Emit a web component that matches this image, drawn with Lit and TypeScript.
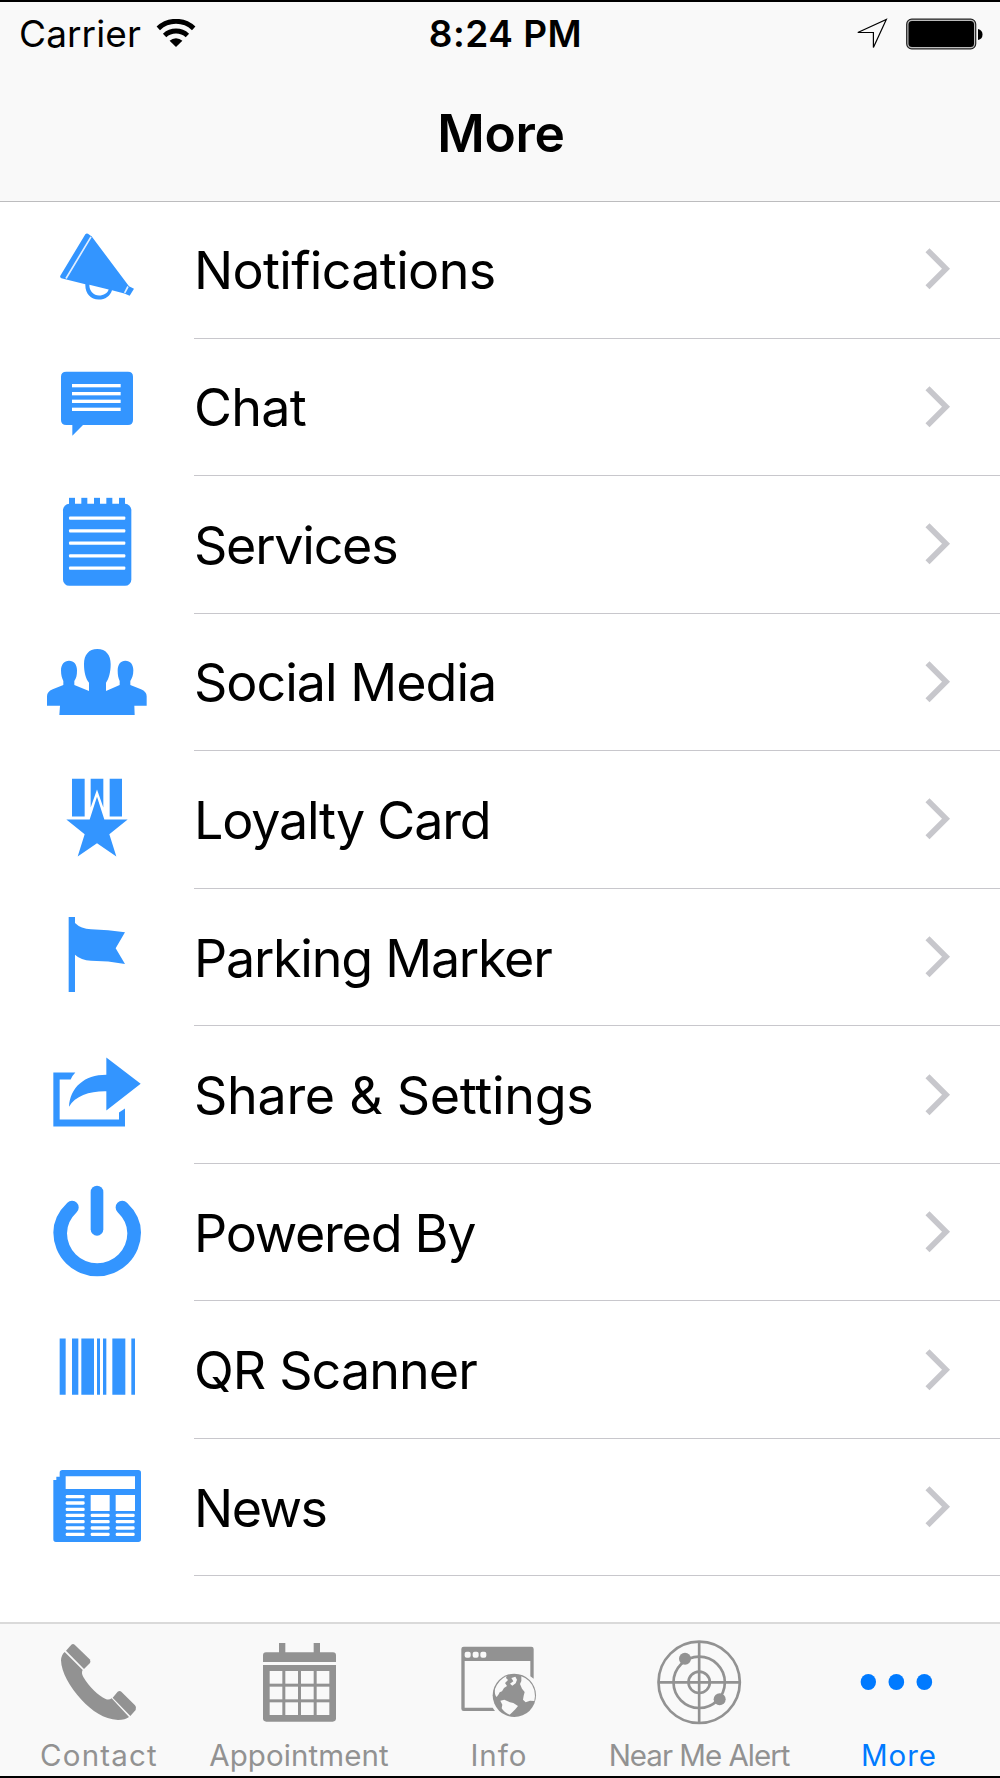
import { LitElement, html, svg, css } from "lit";
import { customElement, property } from "lit/decorators.js";
import { classMap } from "lit/directives/class-map.js";

interface MenuItem {
  label: string;
  spacing: string;
  viewBox: string;
  art: unknown;
}

interface TabItem {
  label: string;
  spacing: string;
  viewBox: string;
  art: unknown;
  active?: boolean;
}

const bars = (x: number, w: number, ys: number[], h: number, r = 3) =>
  ys.map((y) => svg`<rect class="hole" x=${x} y=${y} width=${w} height=${h} rx=${r} />`);

const menu: MenuItem[] = [
  {
    label: "Notifications",
    spacing: "-0.67px",
    viewBox: "0 4.5 582 412.5",
    art: svg`
      <path d="M256 104Q260 100 264 103L272 109Q276 111 278 115L387 260L402 268L389 289L373 282L336 272C331 289 316 300 296 300C272 300 255 282 256 254L184 236Q179 234 181 229Z" />
      <path class="hole" d="M268 256C268 276 281 288 297 288C311 288 323 281 326 270Z" />
      <path class="cut" d="M273 112L198 237M384 261L374 280" />`,
  },
  {
    label: "Chat",
    spacing: "-0.7px",
    viewBox: "0 417 582 412.5",
    art: svg`
      <path d="M199 515H384Q399 515 399 530V660Q399 675 384 675H249L217 707V675H199Q183 675 183 660V530Q183 515 199 515Z" />
      ${bars(216, 146, [552, 576, 599, 623], 10, 0)}`,
  },
  {
    label: "Services",
    spacing: "-1.25px",
    viewBox: "0 19.5 582 412.5",
    art: svg`
      <rect x="189" y="103" width="205" height="246" rx="19" />
      ${[207, 244, 282, 319, 357].map((x) => svg`<rect x=${x} y="85" width="18" height="24" />`)}
      ${bars(207, 169, [141, 179, 216, 254, 291], 10)}`,
  },
  {
    label: "Social Media",
    spacing: "-1px",
    viewBox: "0 432 582 412.5",
    art: svg`
      <path d="M292 537C318 537 332 555 332 582C332 606 327 626 318 638V663L359 645V633C355 625 353 616 353 601C353 583 362 572 376 572C391 572 400 583 400 601C400 616 396 625 391 633V645L423 658Q440 665 440 679V707H403L404 735H178L180 707H141V679Q141 665 158 658L190 645V633C186 625 183 616 183 601C183 583 193 572 207 572C222 572 231 583 231 601C231 616 229 625 223 633V645L267 663V638C257 626 252 606 252 582C252 555 266 537 292 537Z" />`,
  },
  {
    label: "Loyalty Card",
    spacing: "-1.2px",
    viewBox: "0 34.5 582 412.5",
    art: svg`
      <path d="M216 118H254V231H216ZM329 118H366V231H329ZM272 118H310V204L291 150L272 204Z" />
      <path d="M291 172L313 240H383L328 284L349 351L291 311L233 351L254 284L199 240H269Z" />`,
  },
  {
    label: "Parking Marker",
    spacing: "-1.25px",
    viewBox: "0 447 582 412.5",
    art: svg`
      <path d="M206 531H225V549Q243 567 273 568Q325 569 375 577L347 625L375 672Q325 662 273 662Q243 661 225 644V756H206Z" />`,
  },
  {
    label: "Share & Settings",
    spacing: "-0.3px",
    viewBox: "0 -10.5 582 412.5",
    art: svg`
      <path d="M319 84L422 163L319 243V185C270 184 226 198 207 232C210 175 252 136 319 136Z" />
      <path d="M160 129H226Q217 138 212 150H179V270H357V249L375 237V291H160Z" />`,
  },
  {
    label: "Powered By",
    spacing: "-1.25px",
    viewBox: "0 402 582 412.5",
    art: svg`
      <path d="M202 518Q160 558 160 607.500A131.500 131.500 0 0 0 423 607.500Q423 558 381 518A19.500 19.500 0 0 0 353 547Q382 575 382 609.500A90.500 90.500 0 0 1 201 609.500Q201 575 230 547A19.500 19.500 0 0 0 202 518Z" />
      <rect x="272" y="467" width="38" height="150" rx="19" />`,
  },
  {
    label: "QR Scanner",
    spacing: "-0.9px",
    viewBox: "0 4.5 582 412.5",
    art: svg`
      <path d="M179 117H197V286H179ZM216 117H235V286H216ZM244 117H282V286H244ZM291 117H300V286H291ZM309 117H319V286H309ZM337 117H376V286H337ZM394 117H405V286H394Z" />`,
  },
  {
    label: "News",
    spacing: "-1.5px",
    viewBox: "0 417 582 412.5",
    art: svg`
      <path d="M187 510H415Q423 510 423 518V718Q423 726 415 726H168Q160 726 160 718V540H169V530H179V518Q179 510 187 510Z" />
      <path class="hole" d="M197 529H405V567H197ZM272 585H329V633H272ZM347 585H405V633H347Z" />
      ${bars(197, 57, [585, 604, 623, 641, 660, 679, 698], 10, 4)}
      ${bars(272, 57, [641, 660, 679, 698], 10, 4)}
      ${bars(347, 57, [641, 660, 679, 698], 10, 4)}`,
  },
];

const cells = [809, 856, 903, 950].flatMap((x) =>
  [213, 260, 307].map((y) => svg`<rect class="hole" x=${x} y=${y} width="38" height="38" />`),
);

const tabs: TabItem[] = [
  {
    label: "Contact",
    spacing: "1.2px",
    viewBox: "0 72 600 312",
    art: svg`
      <path d="M214 134Q219 130 224 134L269 178Q273 184 270 189L252 207L198 152Z" />
      <path d="M194 156L248 210Q243 219 250 231C268 262 295 287 317 297Q327 301 335 295L387 351Q376 360 354 360C310 357 278 335 243 298C210 262 184 217 183 181Q184 164 194 156Z" />
      <path d="M353 275Q359 271 364 275L405 316Q411 322 407 330L391 348L338 293Z" />`,
  },
  {
    label: "Appointment",
    spacing: "0.1px",
    viewBox: "600 72 600 312",
    art: svg`
      <path d="M837 129H856V157H941V129H960V157H999Q1008 157 1008 166V186H789V166Q789 157 798 157H837Z" />
      <path d="M789 195H1008V355Q1008 365 998 365H799Q789 365 789 355Z" />
      ${cells}`,
  },
  {
    label: "Info",
    spacing: "1px",
    viewBox: "0 72 600 312",
    art: svg`
      <path d="M191 140H394Q401 140 401 147V236L391 229V183H194V323H278L285 333H191Q184 333 184 326V147Q184 140 191 140Z" />
      <rect class="hole" x="194" y="155" width="18" height="18" rx="6" />
      <rect class="hole" x="218" y="155" width="18" height="18" rx="6" />
      <rect class="hole" x="241" y="155" width="18" height="18" rx="6" />
      <circle cx="343" cy="286" r="65" />
      <path class="hole" d="M320 228Q296 239 285 267Q283 286 290 291L296 283L299 277L306 274L312 264L321 258L315 249L324 240L318 234Z" />
      <path class="hole" d="M334 234L346 230L351 239L347 250L337 257L330 251L340 244Z" />
      <path class="hole" d="M364 229Q394 239 403 271Q407 290 403 303L390 302L377 307L369 299L371 287L374 276L366 266L360 252L364 243Z" />
      <path class="hole" d="M301 302L313 299L330 307L340 309L354 318L346 328L337 337L329 344Q313 338 305 325L307 314Z" />`,
  },
  {
    label: "Near Me Alert",
    spacing: "-1px",
    viewBox: "600 72 600 312",
    art: svg`
      <g class="radar">
        <circle cx="897.500" cy="247" r="122" />
        <circle cx="897.500" cy="247" r="77" />
        <circle cx="897.500" cy="247" r="32" />
        <path d="M897.500 124V370M774 247H1020" />
      </g>
      <circle cx="855" cy="176" r="18" />
      <circle cx="959" cy="298" r="18" />`,
  },
  {
    label: "More",
    spacing: "1px",
    viewBox: "300 192 600 312",
    active: true,
    art: svg`
      <ellipse cx="505" cy="366" rx="23" ry="24" />
      <ellipse cx="589" cy="366" rx="23.500" ry="24" />
      <ellipse cx="673" cy="366" rx="23.500" ry="24" />`,
  },
];

@customElement("status-bar")
export class StatusBar extends LitElement {
  static styles = css`
    :host {
      display: grid;
      grid-template-columns: 1fr auto 1fr;
      align-items: center;
      height: 64px;
      padding: 0 17px 0 19px;
      font-size: 37px;
      line-height: 64px;
    }
    .left, .right { display: flex; align-items: center; }
    .left { gap: 15px; }
    .right { justify-content: flex-end; gap: 18px; }
    .carrier { letter-spacing: 0.1px; }
    .time { font-weight: 600; letter-spacing: 0.5px; padding-left: 9px; }
    svg { display: block; }
    .line { fill: none; stroke: #000; }
  `;

  render() {
    return html`
      <div class="left">
        <span class="carrier">Carrier</span>
        <svg width="40" height="31" viewBox="0 0.500 40 31">
          <path class="line" stroke-width="5" d="M2.300 9.800A26 26 0 0 1 37.700 9.800" />
          <path class="line" stroke-width="5" d="M8.600 17A17 17 0 0 1 31.400 17" />
          <path d="M20 28.500L13.600 22.300A9.200 9.200 0 0 1 26.400 22.300Z" />
        </svg>
      </div>
      <span class="time">8:24 PM</span>
      <div class="right">
        <svg width="32" height="34" viewBox="0 0 32 34">
          <path class="line" stroke-width="1.200" d="M1.800 15.500L30.300 2.500L17.400 30.500V15.500Z" />
        </svg>
        <svg width="77" height="32" viewBox="0 0 77 32">
          <rect x="0.700" y="1.200" width="69" height="29.600" rx="5" fill="#bbb" stroke="#222" stroke-width="1.200" />
          <rect x="2.500" y="3" width="65.500" height="26" rx="3.500" />
          <path d="M72 11Q76.500 12 76.500 16.500T72 22Z" />
        </svg>
      </div>
    `;
  }
}

@customElement("menu-row")
export class MenuRow extends LitElement {
  @property({ attribute: false }) item!: MenuItem;

  static styles = css`
    :host { display: flex; height: 137.55px; }
    .icon { flex: none; width: 194px; height: 137.5px; fill: #3395ff; }
    .hole { fill: #fff; }
    .cut { fill: none; stroke: #e0eeff; stroke-width: 5; }
    .body {
      flex: 1;
      display: flex;
      align-items: center;
      justify-content: space-between;
      box-sizing: border-box;
      padding-right: 49px;
      border-bottom: 1px solid #c8c7cc;
    }
    .label { padding-top: 2px; font-size: 52px; white-space: nowrap; }
    .chevron { fill: none; stroke: #c7c7cc; stroke-width: 5.7; }
  `;

  render() {
    return html`
      <svg class="icon" viewBox=${this.item.viewBox}>${this.item.art}</svg>
      <div class="body">
        <span class="label" style="letter-spacing:${this.item.spacing}">${this.item.label}</span>
        <svg class="chevron" width="27" height="44" viewBox="0 0 27 44">
          <path d="M3.500 3.200L22 21.700L3.500 40.200" />
        </svg>
      </div>
    `;
  }
}

@customElement("tab-button")
export class TabButton extends LitElement {
  @property({ attribute: false }) item!: TabItem;

  static styles = css`
    :host { display: block; width: 200px; }
    .tab { color: #929292; fill: #929292; text-align: center; }
    .active { color: #007aff; fill: #007aff; }
    .icon { display: block; width: 200px; height: 104px; }
    .hole { fill: #f9f9f9; }
    .radar { fill: none; stroke: #929292; stroke-width: 8; }
    .label {
      padding-right: 2px;
      font-size: 29.5px;
      line-height: 54px;
      white-space: nowrap;
    }
  `;

  render() {
    return html`
      <div class=${classMap({ tab: true, active: !!this.item.active })}>
        <svg class="icon" viewBox=${this.item.viewBox}>${this.item.art}</svg>
        <div class="label" style="letter-spacing:${this.item.spacing}">${this.item.label}</div>
      </div>
    `;
  }
}

@customElement("app-root")
export class AppRoot extends LitElement {
  static styles = css`
    :host {
      display: flex;
      flex-direction: column;
      box-sizing: border-box;
      height: 1778px;
      overflow: hidden;
      border-top: 2px solid #000;
      border-bottom: 2px solid #000;
      background: #fff;
      color: #000;
      font-family: Inter, "Liberation Sans", sans-serif;
    }
    .top {
      box-sizing: border-box;
      height: 200px;
      background: #f9f9f9;
      border-bottom: 1px solid #bcbcbe;
    }
    .title {
      margin: 0;
      font-size: 51.5px;
      font-weight: 600;
      line-height: 134px;
      letter-spacing: -0.3px;
      text-align: center;
      padding-left: 2px;
    }
    .list { flex: 1; min-height: 0; margin-top: -1px; }
    .tabs {
      display: flex;
      flex: none;
      box-sizing: border-box;
      height: 154px;
      background: #f9f9f9;
      border-top: 2px solid #dadada;
    }
  `;

  render() {
    return html`
      <header class="top">
        <status-bar></status-bar>
        <h1 class="title">More</h1>
      </header>
      <main class="list">${menu.map((item) => html`<menu-row .item=${item}></menu-row>`)}</main>
      <nav class="tabs">${tabs.map((item) => html`<tab-button .item=${item}></tab-button>`)}</nav>
    `;
  }
}
